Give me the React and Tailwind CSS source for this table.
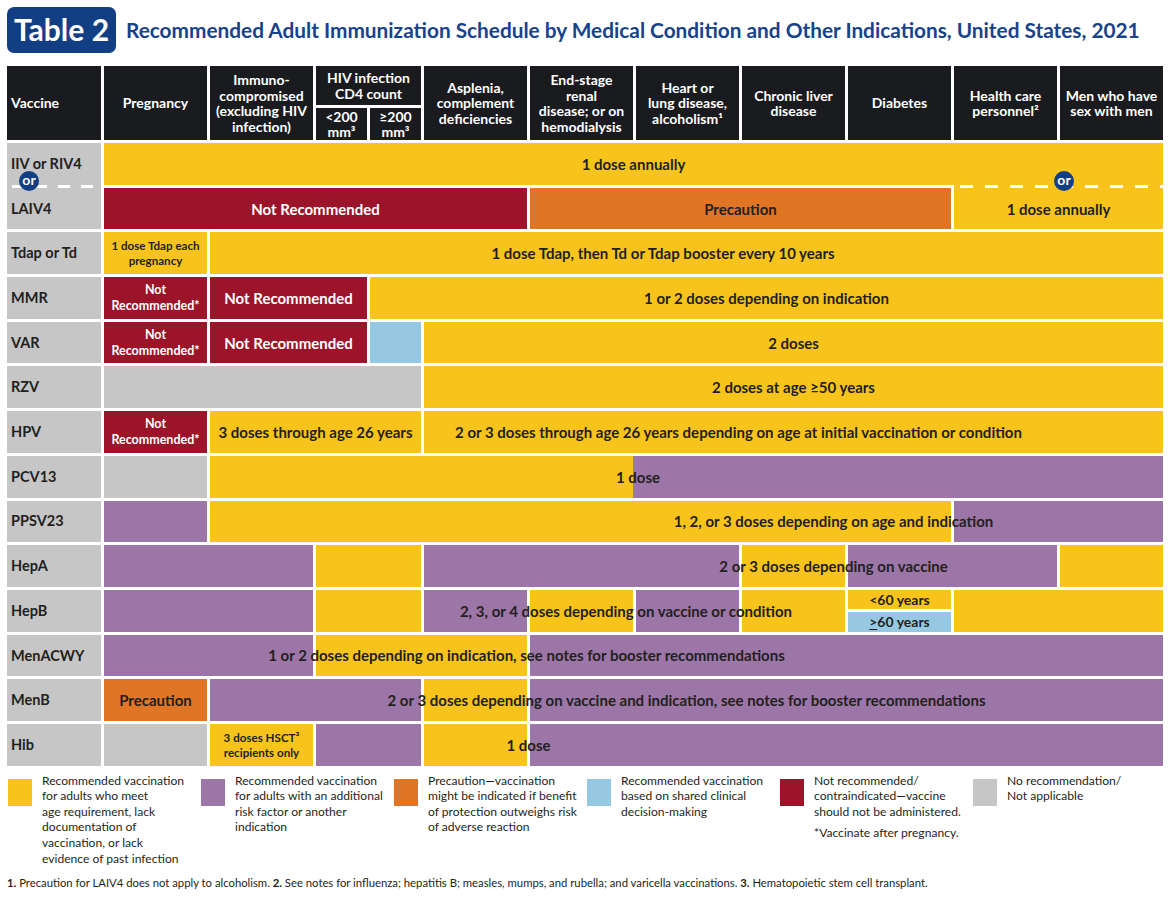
import React from "react";

const COLS =
  "grid grid-cols-[94px_103px_103px_51px_51px_103px_103px_103px_103px_103px_103px_103px] gap-x-[3px]";

const Y = "bg-[#f8c41c]";
const P = "bg-[#9c76a6]";
const R = "bg-[#9c1429]";
const O = "bg-[#e07526]";
const B = "bg-[#96c9e1]";
const G = "bg-[#c6c6c6]";

function Cell({ c, bg, className = "", children }) {
  return <div className={`${c} row-start-1 ${bg} ${className}`}>{children}</div>;
}

function Label({ c, className = "", children }) {
  return (
    <div
      className={`${c} row-start-1 z-10 flex items-center justify-center whitespace-nowrap text-center text-[15px] font-bold leading-[16px] ${className}`}
    >
      {children}
    </div>
  );
}

function Row({ name, nameCell, children }) {
  return (
    <div className={`${COLS} h-[41.7px] text-[#231f20]`}>
      {nameCell || (
        <div className="col-start-1 row-start-1 flex items-center bg-[#c6c6c6] pl-[4px] text-[14.5px] font-bold">
          {name}
        </div>
      )}
      {children}
    </div>
  );
}

function OrBadge({ className }) {
  return (
    <div
      className={`absolute z-20 flex h-[20px] w-[20px] items-center justify-center rounded-full bg-[#123f84] pb-[2px] text-[14px] font-bold leading-none text-white ${className}`}
    >
      or
    </div>
  );
}

function NotRec({ c }) {
  return (
    <Label c={c} className="flex-col !text-[12.5px] leading-[16px] text-white">
      <span>Not</span>
      <span>Recommended*</span>
    </Label>
  );
}

function H({ c, className = "", children }) {
  return (
    <div className={`${c} flex items-center justify-center bg-[#1a1b1f] text-center ${className}`}>
      <div>{children}</div>
    </div>
  );
}

const legend = [
  {
    bg: Y,
    lines: [
      "Recommended vaccination",
      "for adults who meet",
      "age requirement, lack",
      "documentation of",
      "vaccination, or lack",
      "evidence of past infection",
    ],
  },
  {
    bg: P,
    lines: [
      "Recommended vaccination",
      "for adults with an additional",
      "risk factor or another",
      "indication",
    ],
  },
  {
    bg: O,
    lines: [
      "Precaution—vaccination",
      "might be indicated if benefit",
      "of protection outweighs risk",
      "of adverse reaction",
    ],
  },
  {
    bg: B,
    lines: ["Recommended vaccination", "based on shared clinical", "decision-making"],
  },
  {
    bg: R,
    lines: ["Not recommended/", "contraindicated—vaccine", "should not be administered."],
    note: "*Vaccinate after pregnancy.",
  },
  { bg: G, lines: ["No recommendation/", "Not applicable"] },
];

export default function App() {
  return (
    <div className="h-[907px] w-[1170px] overflow-hidden bg-white px-[7px] pt-[7px] font-['Lato','Liberation_Sans',sans-serif] text-[#231f20]">
      {/* title */}
      <div className="flex h-[46px] items-center gap-[10px]">
        <div className="flex h-[46px] w-[109px] items-center justify-center rounded-[7px] bg-[#123f84] pb-[2px] text-[30px] font-bold text-white">
          Table 2
        </div>
        <h1 className="whitespace-nowrap text-[20.8px] font-bold text-[#17428c]">
          Recommended Adult Immunization Schedule by Medical Condition and Other Indications, United States, 2021
        </h1>
      </div>

      {/* header */}
      <div
        className={`${COLS} mt-[13px] grid-rows-[39px_32px] gap-y-[3px] text-[14px] font-bold leading-[15.5px] text-white`}
      >
        <H c="col-start-1 row-start-1 row-end-3 !justify-start pl-[4px]" className="text-left">
          Vaccine
        </H>
        <H c="col-start-2 row-start-1 row-end-3">Pregnancy</H>
        <H c="col-start-3 row-start-1 row-end-3">
          Immuno-
          <br />
          compromised
          <br />
          (excluding HIV
          <br />
          infection)
        </H>
        <H c="col-start-4 col-end-6 row-start-1">
          HIV infection
          <br />
          CD4 count
        </H>
        <H c="col-start-4 row-start-2">
          &lt;200
          <br />
          mm³
        </H>
        <H c="col-start-5 row-start-2">
          ≥200
          <br />
          mm³
        </H>
        <H c="col-start-6 row-start-1 row-end-3">
          Asplenia,
          <br />
          complement
          <br />
          deficiencies
        </H>
        <H c="col-start-7 row-start-1 row-end-3">
          End-stage
          <br />
          renal
          <br />
          disease; or on
          <br />
          hemodialysis
        </H>
        <H c="col-start-8 row-start-1 row-end-3">
          Heart or
          <br />
          lung disease,
          <br />
          alcoholism¹
        </H>
        <H c="col-start-9 row-start-1 row-end-3">
          Chronic liver
          <br />
          disease
        </H>
        <H c="col-start-10 row-start-1 row-end-3">Diabetes</H>
        <H c="col-start-11 row-start-1 row-end-3">
          Health care
          <br />
          personnel²
        </H>
        <H c="col-start-12 row-start-1 row-end-3">
          Men who have
          <br />
          sex with men
        </H>
      </div>

      {/* rows */}
      <div className="mt-[3px] flex flex-col gap-[3px]">
        <Row name="IIV or RIV4">
          <Cell c="col-start-2 col-end-13" bg={Y} />
          <Label c="col-start-2 col-end-13">1 dose annually</Label>
        </Row>

        <Row
          nameCell={
            <div className="col-start-1 row-start-1 -mt-[3px] flex flex-col bg-[#c6c6c6]">
              <div className="relative h-[3px] bg-[repeating-linear-gradient(to_right,transparent_0_5px,#fff_5px_17px,transparent_17px_23px)]">
                <OrBadge className="left-[12px] top-[-14px]" />
              </div>
              <div className="flex flex-1 items-center pl-[4px] text-[14.5px] font-bold">LAIV4</div>
            </div>
          }
        >
          <Cell c="col-start-2 col-end-7" bg={R} />
          <Label c="col-start-2 col-end-7" className="text-white">
            Not Recommended
          </Label>
          <Cell c="col-start-7 col-end-11" bg={O} />
          <Label c="col-start-7 col-end-11">Precaution</Label>
          <Cell c="col-start-11 col-end-13 -mt-[3px]" bg={Y}>
            <div className="relative h-[3px] bg-[repeating-linear-gradient(to_right,transparent_0_6px,#fff_6px_19px,transparent_19px_25px)]">
              <OrBadge className="left-[100px] top-[-14px]" />
            </div>
          </Cell>
          <Label c="col-start-11 col-end-13">1 dose annually</Label>
        </Row>

        <Row name="Tdap or Td">
          <Cell c="col-start-2" bg={Y} />
          <Label c="col-start-2" className="flex-col !text-[11.6px] !leading-[15px]">
            <span>1 dose Tdap each</span>
            <span>pregnancy</span>
          </Label>
          <Cell c="col-start-3 col-end-13" bg={Y} />
          <Label c="col-start-3 col-end-13" className="pr-[47px]">
            1 dose Tdap, then Td or Tdap booster every 10 years
          </Label>
        </Row>

        <Row name="MMR">
          <Cell c="col-start-2" bg={R} />
          <NotRec c="col-start-2" />
          <Cell c="col-start-3 col-end-5" bg={R} />
          <Label c="col-start-3 col-end-5" className="text-white">
            Not Recommended
          </Label>
          <Cell c="col-start-5 col-end-13" bg={Y} />
          <Label c="col-start-5 col-end-13">1 or 2 doses depending on indication</Label>
        </Row>

        <Row name="VAR">
          <Cell c="col-start-2" bg={R} />
          <NotRec c="col-start-2" />
          <Cell c="col-start-3 col-end-5" bg={R} />
          <Label c="col-start-3 col-end-5" className="text-white">
            Not Recommended
          </Label>
          <Cell c="col-start-5" bg={B} />
          <Cell c="col-start-6 col-end-13" bg={Y} />
          <Label c="col-start-6 col-end-13">2 doses</Label>
        </Row>

        <Row name="RZV">
          <Cell c="col-start-2 col-end-6" bg={G} />
          <Cell c="col-start-6 col-end-13" bg={Y} />
          <Label c="col-start-6 col-end-13">2 doses at age ≥50 years</Label>
        </Row>

        <Row name="HPV">
          <Cell c="col-start-2" bg={R} />
          <NotRec c="col-start-2" />
          <Cell c="col-start-3 col-end-6" bg={Y} />
          <Label c="col-start-3 col-end-6">3 doses through age 26 years</Label>
          <Cell c="col-start-6 col-end-13" bg={Y} />
          <Label c="col-start-6 col-end-13" className="pr-[110px]">
            2 or 3 doses through age 26 years depending on age at initial vaccination or condition
          </Label>
        </Row>

        <Row name="PCV13">
          <Cell c="col-start-2" bg={G} />
          <Cell c="col-start-3 col-end-8" bg={Y} />
          <Cell c="col-start-8 col-end-13 -ml-[3px]" bg={P} />
          <Label c="col-start-2 col-end-13" className="pl-[9px]">
            1 dose
          </Label>
        </Row>

        <Row name="PPSV23">
          <Cell c="col-start-2" bg={P} />
          <Cell c="col-start-3 col-end-11" bg={Y} />
          <Cell c="col-start-11 col-end-13" bg={P} />
          <Label c="col-start-3 col-end-13" className="pl-[294px]">
            1, 2, or 3 doses depending on age and indication
          </Label>
        </Row>

        <Row name="HepA">
          <Cell c="col-start-2 col-end-4" bg={P} />
          <Cell c="col-start-4 col-end-6" bg={Y} />
          <Cell c="col-start-6 col-end-9" bg={P} />
          <Cell c="col-start-9" bg={Y} />
          <Cell c="col-start-10 col-end-12" bg={P} />
          <Cell c="col-start-12" bg={Y} />
          <Label c="col-start-3 col-end-13" className="pl-[294px]">
            2 or 3 doses depending on vaccine
          </Label>
        </Row>

        <Row name="HepB">
          <Cell c="col-start-2 col-end-4" bg={P} />
          <Cell c="col-start-4 col-end-6" bg={Y} />
          <Cell c="col-start-6" bg={P} />
          <Cell c="col-start-7" bg={Y} />
          <Cell c="col-start-8" bg={P} />
          <Cell c="col-start-9" bg={Y} />
          <Cell c="col-start-10" bg="" className="flex flex-col gap-[2.5px] text-[14px] font-bold leading-none">
            <div className={`flex flex-1 items-center justify-center ${Y}`}>&lt;60 years</div>
            <div className={`flex flex-1 items-center justify-center ${B}`}>
              <span className="underline underline-offset-2">&gt;</span>60 years
            </div>
          </Cell>
          <Cell c="col-start-11 col-end-13" bg={Y} />
          <Label c="col-start-6 col-end-10" className="pr-[17px]">
            2, 3, or 4 doses depending on vaccine or condition
          </Label>
        </Row>

        <Row name="MenACWY">
          <Cell c="col-start-2 col-end-4" bg={P} />
          <Cell c="col-start-4 col-end-7" bg={Y} />
          <Cell c="col-start-7 col-end-13" bg={P} />
          <Label c="col-start-2 col-end-13" className="pr-[214px]">
            1 or 2 doses depending on indication, see notes for booster recommendations
          </Label>
        </Row>

        <Row name="MenB">
          <Cell c="col-start-2" bg={O} />
          <Label c="col-start-2">Precaution</Label>
          <Cell c="col-start-3 col-end-6" bg={P} />
          <Cell c="col-start-6" bg={Y} />
          <Cell c="col-start-7 col-end-13" bg={P} />
          <Label c="col-start-3 col-end-13">
            2 or 3 doses depending on vaccine and indication, see notes for booster recommendations
          </Label>
        </Row>

        <Row name="Hib">
          <Cell c="col-start-2" bg={G} />
          <Cell c="col-start-3" bg={Y} />
          <Label c="col-start-3" className="flex-col !text-[11.6px] !leading-[15px]">
            <span>3 doses HSCT³</span>
            <span>recipients only</span>
          </Label>
          <Cell c="col-start-4 col-end-6" bg={P} />
          <Cell c="col-start-6" bg={Y} />
          <Cell c="col-start-7 col-end-13" bg={P} />
          <Label c="col-start-6 col-end-8">1 dose</Label>
        </Row>
      </div>

      {/* legend */}
      <div className="mt-[7px] grid grid-cols-[193px_193px_193px_193px_193px_193px] pl-[1px]">
        {legend.map((l, i) => (
          <div key={i} className="flex gap-[10px]">
            <div className={`mt-[6px] h-[27px] w-[24px] shrink-0 ${l.bg}`} />
            <div className="text-[12.1px] leading-[15.6px] text-[#231f20]">
              {l.lines.map((t) => (
                <div key={t} className="whitespace-nowrap">
                  {t}
                </div>
              ))}
              {l.note && <div className="mt-[6px] whitespace-nowrap">{l.note}</div>}
            </div>
          </div>
        ))}
      </div>

      {/* footnote */}
      <p className="mt-[10px] whitespace-nowrap text-[11.3px] leading-[14px] text-[#231f20]">
        <b>1.</b> Precaution for LAIV4 does not apply to alcoholism. <b>2.</b> See notes for influenza; hepatitis B;
        measles, mumps, and rubella; and varicella vaccinations. <b>3.</b> Hematopoietic stem cell transplant.
      </p>
    </div>
  );
}
